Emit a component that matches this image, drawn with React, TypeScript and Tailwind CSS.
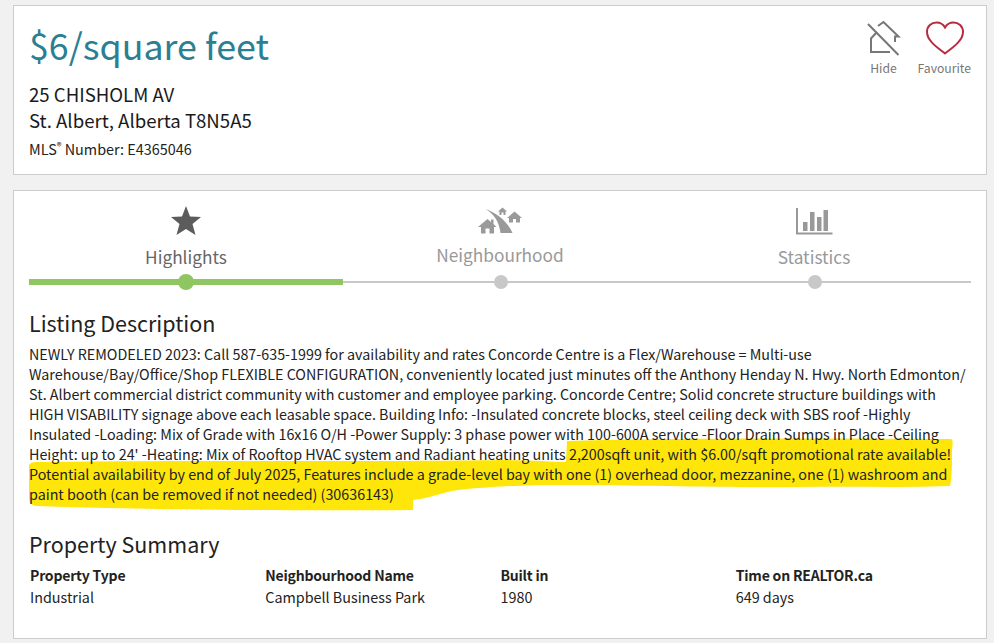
const sans = 'font-["Noto_Sans_CJK_SC","Source_Sans_Pro",sans-serif]';

function HideIcon() {
  return (
    <svg viewBox="866 20 36 38" className="w-[36px] h-[38px]" fill="none" stroke="#777" strokeWidth="2">
      <path d="M868 24 L898.500 55" />
      <path d="M877 32 L871 38.500 V52 H890" />
      <path d="M878 26 L883.500 22 L898.500 36.500 H895 V42" />
    </svg>
  );
}

function HeartIcon() {
  return (
    <svg viewBox="925 20 40 36" className="w-[40px] h-[36px]" fill="none" stroke="#b92b41" strokeWidth="2">
      <path d="M945 53.500 C938 48 927 41 927 32 C927 26 931.500 22.500 936.500 22.500 C940 22.500 943 24 945 27.500 C947 24 950 22.500 953.500 22.500 C958.500 22.500 963 26 963 32 C963 41 952 48 945 53.500 Z" />
    </svg>
  );
}

function NeighbourhoodIcon() {
  return (
    <svg viewBox="478 205 46 30" className="w-[46px] h-[30px]" fill="#9a9a9a">
      <path d="M486.500 208 C495 213 500 220 501.500 232 H513.500 C509 221 498 212 486.500 208 Z" />
      <path d="M479 226 L488.500 218 L492 221 V218.500 H494.500 V223 L497.500 226 H495 V232.500 H490.500 V227.500 H486.500 V232.500 H482 V226 Z" />
      <path d="M508 217 L515.500 210.500 L523 217 H521 V221.500 H517 V218 H514 V221.500 H510 V217 Z" />
      <path d="M499 210.500 L503.500 206.500 L508 210.500 H506.500 V214 H504.500 V211.500 H502.500 V214 H500.500 V210.500 Z" />
    </svg>
  );
}

function StatisticsIcon() {
  return (
    <svg viewBox="795 206 39 30" className="w-[39px] h-[30px]">
      <path d="M797 208 V233.500 H832.500" fill="none" stroke="#999" strokeWidth="2" />
      <rect x="803" y="222" width="4.500" height="9" fill="#999" />
      <rect x="810" y="212" width="4.500" height="19" fill="#999" />
      <rect x="817" y="217" width="4.500" height="14" fill="#999" />
      <rect x="823.500" y="210" width="4.500" height="21" fill="#999" />
    </svg>
  );
}

function StarIcon() {
  return (
    <svg viewBox="0 0 30 30" className="w-[30px] h-[30px]" fill="#5c5c5c">
      <path d="M15 0 L19 10.500 L30 11 L21.500 18 L24.500 29 L15 23 L5.500 29 L8.500 18 L0 11 L11 10.500 Z" />
    </svg>
  );
}

function Tab({ label, active, icon, labelClass }: { label: string; active?: boolean; icon: React.ReactNode; labelClass: string }) {
  return (
    <div className="flex-1 flex flex-col items-center">
      <div className="h-[30px] flex items-center justify-center">{icon}</div>
      <div className={`text-[17.300px] leading-[26px] ${active ? 'text-[#666]' : 'text-[#999]'} ${labelClass}`}>{label}</div>
    </div>
  );
}

const summary = [
  ['Property Type', 'Industrial'],
  ['Neighbourhood Name', 'Campbell Business Park'],
  ['Built in', '1980'],
  ['Time on REALTOR.ca', '649 days'],
];

export default function App() {
  return (
    <div className={`${sans} h-screen overflow-hidden bg-[#f1f1f1] pt-[5px] pl-[13px] pr-[7px] text-[#222]`}>
      {/* Header card */}
      <div className="h-[170px] bg-white border border-[#ccc] pl-[15px] pr-[15px] flex justify-between">
        <div className="pt-[13px]">
          <h1 className="text-[35.800px] leading-[50px] text-[#2a7f92]">$6/square feet</h1>
          <div className="mt-[12px] text-[18.600px] leading-[26px] text-[#1a1a1a]">25 CHISHOLM AV</div>
          <div className="text-[18.600px] leading-[26px] text-[#1a1a1a]">St. Albert, Alberta T8N5A5</div>
          <div className="mt-[5px] text-[14.400px] leading-[22px]">
            MLS<sup className="text-[10px]">®</sup> Number: E4365046
          </div>
        </div>
        <div className="pt-[14px] flex gap-[16px] text-[12.200px] leading-[18px] text-[#777]">
          <div className="flex flex-col items-center">
            <HideIcon />
            <span className="mt-[1px]">Hide</span>
          </div>
          <div className="flex flex-col items-center">
            <div className="h-[38px] flex items-start ml-[1px]"><HeartIcon /></div>
            <span className="mt-[1px]">Favourite</span>
          </div>
        </div>
      </div>

      {/* Details card */}
      <div className="mt-[15px] h-[449px] bg-white border border-[#ccc] px-[15px] pt-[15px]">
        <div className="flex">
          <Tab label="Highlights" active icon={<StarIcon />} labelClass="mt-[8px]" />
          <Tab label="Neighbourhood" icon={<NeighbourhoodIcon />} labelClass="mt-[6px]" />
          <Tab label="Statistics" icon={<StatisticsIcon />} labelClass="mt-[8px]" />
        </div>
        <div className="relative mt-[4px] h-[16px] flex items-center">
          <div className="w-1/3 h-[6px] bg-[#90c662]" />
          <div className="flex-1 h-[2px] bg-[#c8c8c8]" />
          <div className="absolute left-[149px] top-0 w-[16px] h-[16px] rounded-full bg-[#90c662]" />
          <div className="absolute left-[465px] top-[1px] w-[14px] h-[14px] rounded-full bg-[#c8c8c8]" />
          <div className="absolute left-[779px] top-[1px] w-[14px] h-[14px] rounded-full bg-[#c8c8c8]" />
        </div>

        <h2 className="mt-[17px] text-[21.500px] leading-[32px] text-[#222]">Listing Description</h2>
        <div className="relative mt-[5px]">
          {/* marker scribble drawn over the screenshot */}
          <svg viewBox="29 345 942 170" className="absolute left-0 top-[1px] w-[942px] h-[170px]" fill="#fee60a">
            <path d="M567 441 C650 438 850 438 951 439 C953 440 953 442 952 450 C952 465 952 478 950 486 C900 488 850 486 800 487 C720 488 650 485 560 485 C520 485 480 487 452 491 C435 495 425 499 413 500 L413 510 C300 511 150 510 36 506 C31 505 29 502 29 498 L29 465 C31 462 33 462 40 462 C200 460 400 462 500 460 C530 460 552 462 566 462 L567 441 Z" />
          </svg>
          <p className="relative text-[14.320px] leading-[20px] text-[#222]">
            NEWLY REMODELED 2023: Call 587-635-1999 for availability and rates Concorde Centre is a Flex/Warehouse = Multi-use<br />
            Warehouse/Bay/Office/Shop FLEXIBLE CONFIGURATION, conveniently located just minutes off the Anthony Henday N. Hwy. North Edmonton/<br />
            St. Albert commercial district community with customer and employee parking. Concorde Centre; Solid concrete structure buildings with<br />
            HIGH VISABILITY signage above each leasable space. Building Info: -Insulated concrete blocks, steel ceiling deck with SBS roof -Highly<br />
            Insulated -Loading: Mix of Grade with 16x16 O/H -Power Supply: 3 phase power with 100-600A service -Floor Drain Sumps in Place -Ceiling<br />
            Height: up to 24' -Heating: Mix of Rooftop HVAC system and Radiant heating units 2,200sqft unit, with $6.00/sqft promotional rate available!<br />
            Potential availability by end of July 2025, Features include a grade-level bay with one (1) overhead door, mezzanine, one (1) washroom and<br />
            paint booth (can be removed if not needed) (30636143)
          </p>
        </div>

        <h2 className="mt-[24px] text-[21.500px] leading-[32px] text-[#222]">Property Summary</h2>
        <div className="mt-[4px] grid grid-cols-4 pl-[1px]">
          {summary.map(([label, value]) => (
            <div key={label}>
              <div className="text-[14px] leading-[22px] font-semibold tracking-[-0.2px]">{label}</div>
              <div className="text-[14.350px] leading-[22px]">{value}</div>
            </div>
          ))}
        </div>
      </div>
    </div>
  );
}
